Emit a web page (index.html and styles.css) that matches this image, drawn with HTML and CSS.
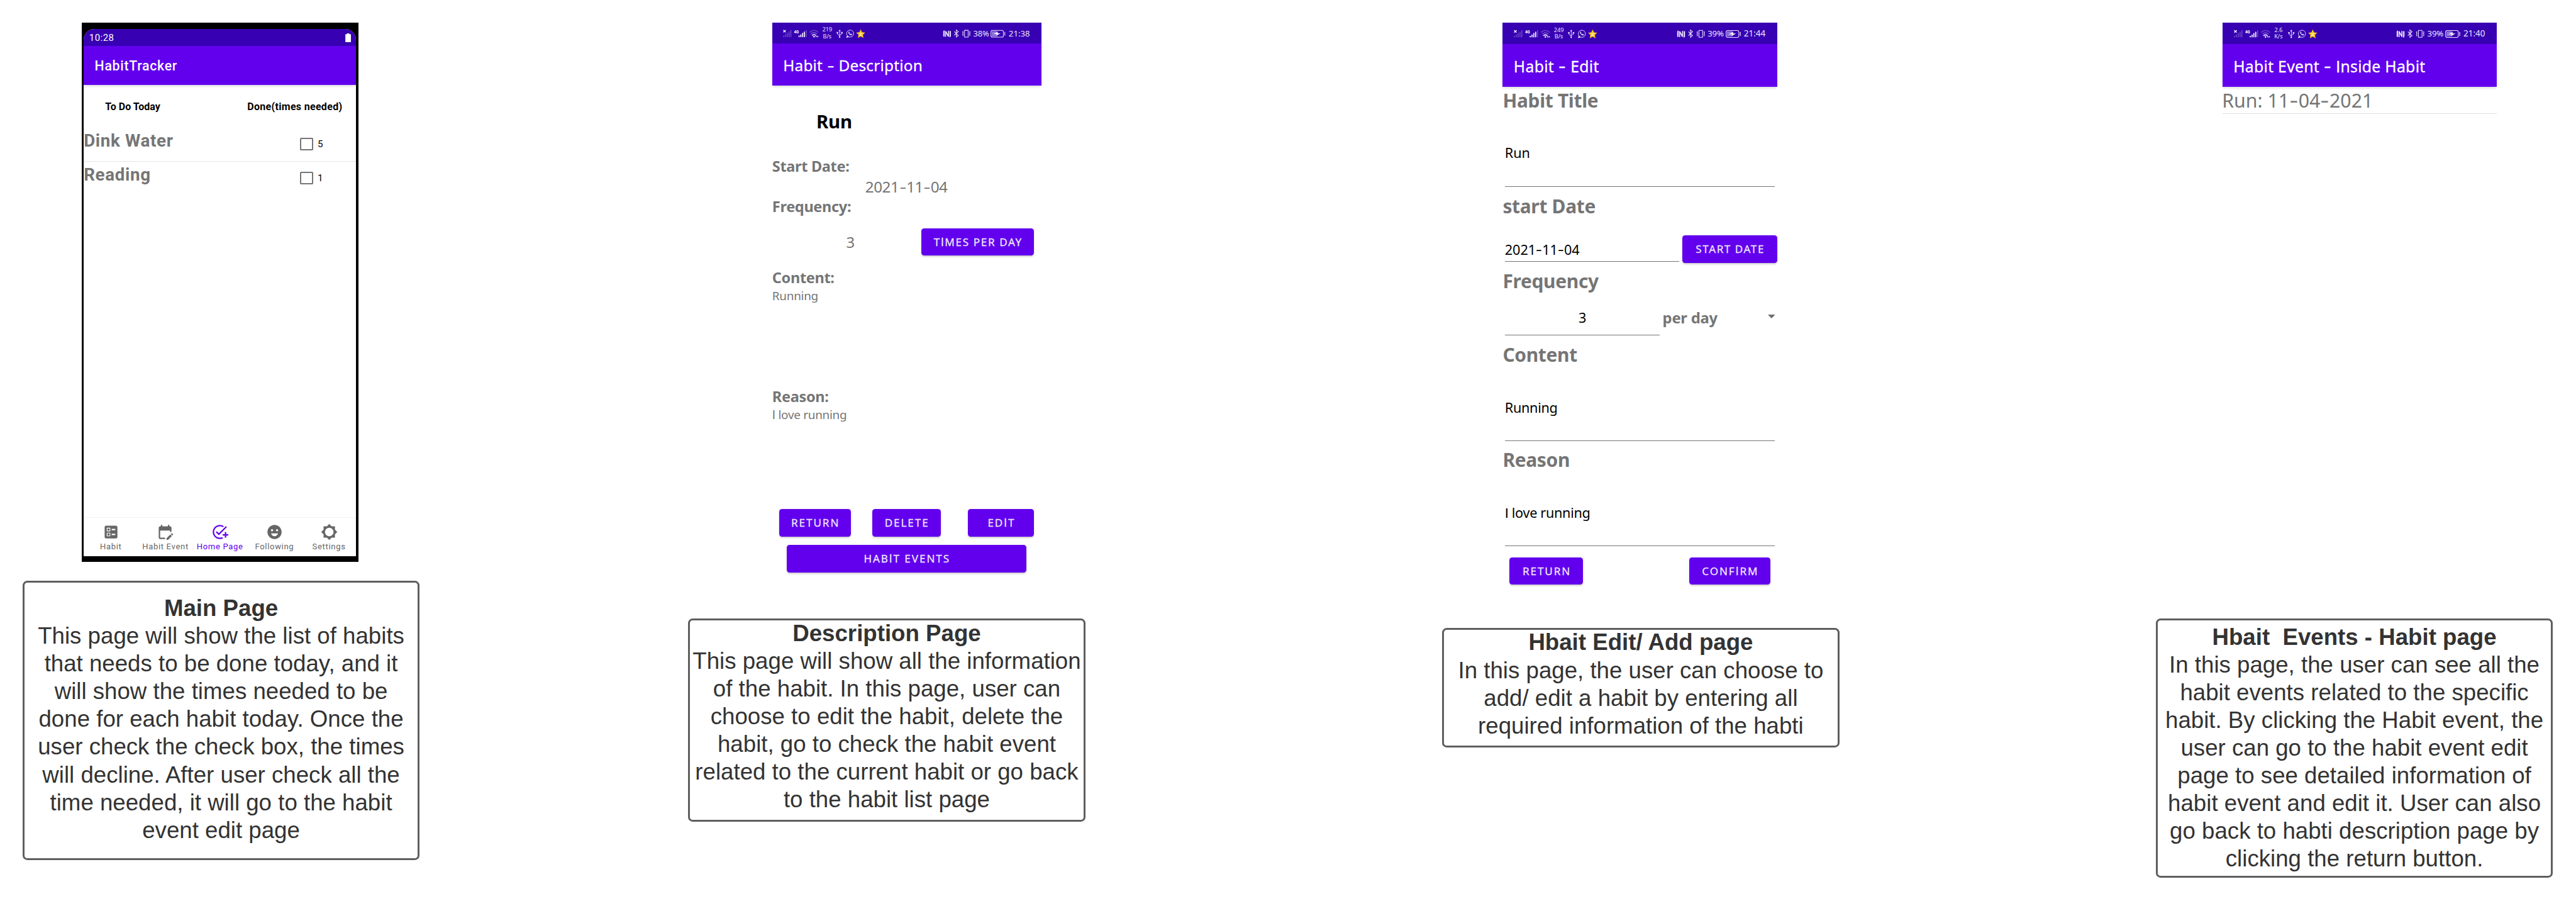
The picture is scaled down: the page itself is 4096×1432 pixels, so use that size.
FILE: index.html
```html
<!DOCTYPE html>
<html lang="en">
<head>
<meta charset="utf-8">
<title>HabitTracker storyboard</title>
<link rel="stylesheet" href="styles.css">
</head>
<body>
<svg class="defs" aria-hidden="true">
  <symbol id="net" viewBox="55 27 200 108">
    <path d="M60 63l13 12M73 63l-13 12" stroke="#fff" stroke-width="4"/>
    <path d="M62 100v-8M71.500 100v-14M81 100v-22M90.500 100v-29M100 100v-37" stroke="#7454cc" stroke-width="4.500"/>
    <text x="117" y="80" class="net-label" textLength="25" lengthAdjust="spacingAndGlyphs">4G</text>
    <path d="M143.500 100v-8M153 100v-14M162.500 100v-22M172 100v-29" stroke="#fff" stroke-width="5.500"/>
    <path d="M181.500 100v-37" stroke="#7454cc" stroke-width="4.500"/>
    <g fill="none" stroke-width="5">
      <path d="M199 75Q222 54 246 75" stroke="#6543c4"/>
      <path d="M206 84Q222 69 239 84" stroke="#7454cc"/>
      <path d="M212 92Q222 82 233 92" stroke="#fff"/>
    </g>
    <circle cx="222.500" cy="98" r="4" fill="#fff"/>
    <path d="M236 92v10l-6-5zM240 92v10l7-5z" fill="#fff"/>
  </symbol>
  <symbol id="apps" viewBox="330 27 170 108">
    <g fill="none" stroke="#e4dcf8" stroke-width="3.200">
      <path d="M357 66v34M345 77v7l12 9M369 77v6l-12 7"/>
      <circle cx="412.500" cy="81.500" r="18.500"/>
      <path d="M398 93l-5 9 12-3" fill="#e4dcf8"/>
    </g>
    <path d="M357 60l6 9h-12zM341 73h8v7h-8zM365 73h8v7h-8z" fill="#e4dcf8"/>
    <circle cx="357" cy="100" r="4" fill="#e4dcf8"/>
    <path d="M404 73c-2 3 0 9 5 13s10 6 13 3l1-4-6-3-3 2c-3-1-5-3-6-6l2-2-3-6z" fill="#e4dcf8"/>
    <path d="M468.500 61l6.600 14.200 15.600 1.900-11.500 10.600 3 15.300-13.700-7.600-13.700 7.600 3-15.300-11.500-10.600 15.600-1.900z" fill="#ffc41d" stroke="#ffc41d" stroke-width="2" stroke-linejoin="round"/>
    <path d="M460 80h15l-13 11h15" fill="none" stroke="#fff3b8" stroke-width="3.500"/>
  </symbol>
  <symbol id="radios" viewBox="900 27 160 108">
    <g fill="none" stroke="#e9e2fa">
      <path d="M909.500 97V71q0-3 4-3M943 68v26q0 4-4 4" stroke-width="7"/>
      <path d="M918.500 99V69l15 28V67" stroke-width="5.500"/>
      <path d="M964 71l22 20-11 9V62l11 9-22 20" stroke-width="3.500"/>
      <path d="M1019 64h19v36h-19z" stroke-width="3.500" stroke-linejoin="round"/>
      <path d="M1012 69l-3 5 3 5-3 5 3 5-3 5M1045 69l3 5-3 5 3 5-3 5 3 5" stroke-width="3.500"/>
    </g>
  </symbol>
  <symbol id="power" viewBox="1155 27 85 108">
    <rect x="1160.500" y="64.500" width="66" height="36" rx="8" fill="none" stroke="#e9e2fa" stroke-width="3.500"/>
    <rect x="1165" y="69" width="30" height="27" rx="3" fill="#8f73da"/>
    <path d="M1175 84l22-12-1 8h16l-22 12 1-8z" fill="#fff"/>
    <path d="M1234 73v19" stroke="#e9e2fa" stroke-width="4"/>
  </symbol>
</svg>

<main class="board">

  <section class="column column-main">
    <div class="device">
      <div class="device-screen">
        <div class="android-status">
          <span>10:28</span>
          <svg class="android-battery" viewBox="0 0 10 16"><path d="M3 0h4v1.500h2q1 0 1 1V15q0 1-1 1H1q-1 0-1-1V2.500q0-1 1-1h2z" fill="#fff"/></svg>
        </div>
        <header class="android-bar">HabitTracker</header>
        <div class="list-head"><span>To Do Today</span><span class="list-head-done">Done(times needed)</span></div>
        <ul class="todo">
          <li><span class="todo-name">Dink Water</span><span class="todo-check"></span><span class="todo-count">5</span></li>
          <li><span class="todo-name">Reading</span><span class="todo-check"></span><span class="todo-count">1</span></li>
        </ul>
        <nav class="tabs">
          <div class="tab"><svg viewBox="0 0 24 24"><path fill-rule="evenodd" d="M13 9.500h5v-2h-5v2zm0 7h5v-2h-5v2zm6 4.500H5c-1.100 0-2-.9-2-2V5c0-1.100.9-2 2-2h14c1.100 0 2 .9 2 2v14c0 1.100-.9 2-2 2zM6 11h5V6H6v5zm1-4h3v3H7V7zM6 18h5v-5H6v5zm1-4h3v3H7v-3z"/></svg>Habit</div>
          <div class="tab"><svg viewBox="0 0 24 24"><path d="M5 10h14v2h2V6c0-1.100-.9-2-2-2h-1V2h-2v2H8V2H6v2H5c-1.110 0-1.990.9-1.990 2L3 20c0 1.100.89 2 2 2h7v-2H5V10zm17.840 6.280l-.71.71-2.120-2.120.71-.71c.39-.39 1.020-.39 1.410 0l.71.71c.39.39.39 1.020 0 1.410zm-3.540-.7l2.120 2.120-5.300 5.300H14v-2.120l5.300-5.300z"/></svg>Habit Event</div>
          <div class="tab tab-active"><svg viewBox="0 0 24 24"><path d="M22 5.180L10.590 16.600l-4.240-4.240 1.410-1.410 2.830 2.830 10-10L22 5.180zM12 20c-4.410 0-8-3.590-8-8s3.590-8 8-8c1.570 0 3.040.46 4.280 1.250l1.450-1.450C16.100 2.670 14.130 2 12 2 6.480 2 2 6.480 2 12s4.480 10 10 10c1.730 0 3.360-.44 4.780-1.220l-1.500-1.500c-1 .46-2.110.72-3.280.72zm7-5h-3v2h3v3h2v-3h3v-2h-3v-3h-2v3z"/></svg>Home Page</div>
          <div class="tab"><svg viewBox="0 0 24 24"><path d="M11.990 2C6.470 2 2 6.480 2 12s4.470 10 9.990 10C17.520 22 22 17.520 22 12S17.520 2 11.990 2zM8.500 8c.83 0 1.500.67 1.500 1.500S9.330 11 8.500 11 7 10.330 7 9.500 7.670 8 8.500 8zM12 18c-2.280 0-4.220-1.660-5-4h10c-.78 2.340-2.720 4-5 4zm3.500-7c-.83 0-1.500-.67-1.500-1.500S14.670 8 15.500 8s1.500.67 1.500 1.500-.67 1.500-1.500 1.500z"/></svg>Following</div>
          <div class="tab"><svg viewBox="0 0 24 24"><path d="M20 15.310L23.310 12 20 8.690V4h-4.690L12 .69 8.690 4H4v4.690L.69 12 4 15.310V20h4.690L12 23.310 15.310 20H20v-4.690zM12 18c-3.310 0-6-2.690-6-6s2.690-6 6-6 6 2.690 6 6-2.690 6-6 6z"/></svg>Settings</div>
        </nav>
      </div>
    </div>
    <article class="note note-main">
      <h2>Main Page</h2>
      <p>This page will show the list of habits<br>that needs to be done today, and it<br>will show the times needed to be<br>done for each habit today. Once the<br>user check the check box, the times<br>will decline. After user check all the<br>time needed, it will go to the habit<br>event edit page</p>
    </article>
  </section>

  <section class="column column-description">
    <div class="screen screen-description">
      <div class="status">
        <svg class="status-net"><use href="#net"/></svg>
        <span class="status-speed">219<br>B/s</span>
        <svg class="status-apps"><use href="#apps"/></svg>
        <svg class="status-radios"><use href="#radios"/></svg>
        <span class="status-percent">38%</span>
        <svg class="status-power"><use href="#power"/></svg>
        <span class="status-time">21:38</span>
      </div>
      <header class="bar">Habit <span class="dash">-</span> Description</header>
      <h1 class="habit-name">Run</h1>
      <h3 class="label">Start Date:</h3>
      <div class="start-date">2021<span class="dash">-</span>11<span class="dash">-</span>04</div>
      <h3 class="label">Frequency:</h3>
      <div class="times-row"><span class="times">3</span><button class="btn btn-times">T<span class="i">I</span>MES PER DAY</button></div>
      <h3 class="label">Content:</h3>
      <p class="detail">Running</p>
      <h3 class="label label-reason">Reason:</h3>
      <p class="detail"><span class="i">I</span> love running</p>
      <div class="actions">
        <button class="btn btn-return">RETURN</button>
        <button class="btn btn-delete">DELETE</button>
        <button class="btn btn-edit">ED<span class="i">I</span>T</button>
      </div>
      <button class="btn btn-events">HAB<span class="i">I</span>T EVENTS</button>
    </div>
    <article class="note note-description">
      <h2>Description Page</h2>
      <p>This page will show all the information<br>of the habit. In this page, user can<br>choose to edit the habit, delete the<br>habit, go to check the habit event<br>related to the current habit or go back<br>to the habit list page</p>
    </article>
  </section>

  <section class="column column-edit">
    <div class="screen screen-edit">
      <div class="status">
        <svg class="status-net"><use href="#net"/></svg>
        <span class="status-speed">249<br>B/s</span>
        <svg class="status-apps"><use href="#apps"/></svg>
        <svg class="status-radios"><use href="#radios"/></svg>
        <span class="status-percent">39%</span>
        <svg class="status-power"><use href="#power"/></svg>
        <span class="status-time">21:44</span>
      </div>
      <header class="bar">Habit <span class="dash">-</span> Edit</header>
      <h3 class="heading">Habit Title</h3>
      <div class="field field-tall">Run</div>
      <h3 class="heading">start Date</h3>
      <div class="date-row">
        <div class="field field-date">2021<span class="dash">-</span>11<span class="dash">-</span>04</div>
        <button class="btn btn-date">START DATE</button>
      </div>
      <h3 class="heading heading-frequency">Frequency</h3>
      <div class="frequency-row">
        <div class="field field-count">3</div>
        <span class="unit">per day</span>
        <svg class="caret" viewBox="0 0 12 6"><path d="M0 0h12L6 6z" fill="#6f6f6f"/></svg>
      </div>
      <h3 class="heading">Content</h3>
      <div class="field field-tall field-content">Running</div>
      <h3 class="heading">Reason</h3>
      <div class="field field-tall field-content"><span class="i">I</span> love running</div>
      <div class="confirm-row">
        <button class="btn btn-back">RETURN</button>
        <button class="btn btn-confirm">CONF<span class="i">I</span>RM</button>
      </div>
    </div>
    <article class="note note-edit">
      <h2>Hbait Edit/ Add page</h2>
      <p>In this page, the user can choose to<br>add/ edit a habit by entering all<br>required information of the habti</p>
    </article>
  </section>

  <section class="column column-events">
    <div class="screen screen-events">
      <div class="status">
        <svg class="status-net"><use href="#net"/></svg>
        <span class="status-speed">2.6<br>K/s</span>
        <svg class="status-apps"><use href="#apps"/></svg>
        <svg class="status-radios"><use href="#radios"/></svg>
        <span class="status-percent">39%</span>
        <svg class="status-power"><use href="#power"/></svg>
        <span class="status-time">21:40</span>
      </div>
      <header class="bar">Habit Event <span class="dash">-</span> <span class="i">I</span>nside Habit</header>
      <div class="event">Run: 11<span class="dash">-</span>04<span class="dash">-</span>2021</div>
    </div>
    <article class="note note-events">
      <h2>Hbait&nbsp; Events - Habit page</h2>
      <p>In this page, the user can see all the<br>habit events related to the specific<br>habit. By clicking the Habit event, the<br>user can go to the habit event edit<br>page to see detailed information of<br>habit event and edit it. User can also<br>go back to habti description page by<br>clicking the return button.</p>
    </article>
  </section>

</main>
</body>
</html>
```
FILE: styles.css
```css
/* One rem is 1/446 of the board's width. */
html { font-size: calc(100vw / 446); }
*, *::before, *::after { box-sizing: border-box; }
body { margin: 0; background: #fff; overflow: hidden; }
h1, h2, h3, p, ul { margin: 0; padding: 0; font-weight: inherit; font-size: inherit; }
ul { list-style: none; }
svg { display: block; flex: none; }
.defs { position: absolute; width: 0; height: 0; }

.board {
  display: flex;
  align-items: flex-start;
  height: 100vh;
  padding: 3.95rem 0 0 3.88rem;
  white-space: nowrap;
}
.column { flex: none; display: flex; flex-direction: column; width: 68.8rem; }
.column-description { margin-left: 46.45rem; }
.column-edit { margin-left: 61.75rem; }
.column-events { margin-left: 54.75rem; }

/* Notes under the screens */
.note {
  border: .36rem solid #5e5e5e;
  border-radius: .8rem;
  color: #333;
  font: 400 3.993rem/4.8rem "Liberation Sans", Arial, sans-serif;
  text-align: center;
}
.note h2 { font-weight: 700; }
.note-main { height: 48.3rem; margin-top: 3.3rem; padding-top: 2.03rem; }
.note-description { height: 35.2rem; margin-top: 5.1rem; }
.note-edit { height: 20.7rem; margin-top: 6.7rem; }
.note-description h2, .note-edit h2 { margin-top: -.15rem; }
.note-events { height: 44.9rem; margin-top: 5.1rem; padding-top: .5rem; }

/* Main page device */
.device {
  width: 47.9rem;
  height: 93.3rem;
  margin-left: 10.3rem;
  padding: 1.1rem .4rem 1rem .3rem;
  background: #000;
  font-family: Roboto, sans-serif;
}
.device-screen {
  display: flex;
  flex-direction: column;
  height: 100%;
  border-radius: 1.9rem 1.9rem 0 0;
  background: #fff;
}
.android-status {
  display: flex;
  align-items: center;
  justify-content: space-between;
  height: 2.9rem;
  padding: .15rem .9rem 0 .97rem;
  border-radius: 1.9rem 1.9rem 0 0;
  background: #3700b3;
  color: #fff;
  font-size: 1.63rem;
  letter-spacing: .05rem;
}
.android-battery { width: 1rem; height: 1.55rem; }
.android-bar {
  height: 6.7rem;
  padding: .3rem 0 0 1.92rem;
  background: #6200ee;
  box-shadow: 0 .3rem .4rem -.1rem rgba(0, 0, 0, .15);
  color: #fff;
  font-size: 2.32rem;
  font-weight: 500;
  letter-spacing: .078rem;
  line-height: 6.4rem;
}
.list-head {
  display: flex;
  justify-content: space-between;
  margin-top: 2.85rem;
  padding: 0 2.4rem 0 3.74rem;
  font-size: 1.74rem;
  font-weight: 700;
  line-height: 2rem;
}
.list-head-done { letter-spacing: .036rem; }
.todo { flex: 1; margin-top: 2.6rem; }
.todo li { display: flex; height: 5.9rem; }
.todo li:first-child { border-bottom: .2rem solid #e4e4e4; }
.todo-name {
  width: 37.5rem;
  padding: .42rem 0 0 .02rem;
  color: #757575;
  font-size: 3.02rem;
  font-weight: 700;
  letter-spacing: .073rem;
  line-height: 3.6rem;
}
.todo-check {
  width: 2.2rem;
  height: 2.15rem;
  margin-top: 1.75rem;
  border: .22rem solid #757575;
  border-radius: .2rem;
}
.todo-count { margin: 1.75rem 0 0 .8rem; font-size: 1.64rem; line-height: 2.2rem; }
.tabs {
  display: flex;
  height: 6.8rem;
  padding-top: 1rem;
  border-top: .12rem solid #f2f2f2;
}
.tab {
  flex: 1;
  display: flex;
  flex-direction: column;
  align-items: center;
  color: #666;
  font-size: 1.42rem;
  letter-spacing: .074rem;
  line-height: 1.8rem;
}
.tab svg { width: 2.95rem; height: 2.95rem; margin-bottom: .22rem; fill: currentColor; }
.tab-active { color: #6200ee; }

/* Shared parts of the phone screens */
.screen {
  display: flex;
  flex-direction: column;
  width: 47.5rem;
  height: 98rem;
  margin-left: 10.5rem;
  color: #757575;
  font-family: "Noto Sans", sans-serif;
}
.screen-description { width: 46.6rem; margin-left: 14.57rem; }
.screen-events { margin-left: 11.55rem; }
.i { font-family: Lato, sans-serif; line-height: 0; }
.dash { display: inline-block; margin: 0 .089em; transform: translateY(-.04em) scaleX(1.4); }

.status {
  flex: none;
  display: flex;
  align-items: center;
  height: 3.7rem;
  padding-left: 1.833em;
  background: #3700b3;
  color: #e9e2fa;
  font-size: 1rem;
}
.screen-description .status { height: 3.6rem; font-size: .981rem; }
.status-net { width: 6.667em; height: 3.6em; }
.status-speed { width: 1.7em; margin: 0 .43em 0 .367em; line-height: 1.17em; text-align: center; }
.status-apps { width: 5.667em; height: 3.6em; }
.status-radios { width: 5.333em; height: 3.6em; margin-left: 13.333em; }
.status-percent { width: 1.92em; margin-left: .11em; font-size: 1.45em; letter-spacing: -.02em; }
.status-power { width: 2.833em; height: 3.6em; margin-left: .2em; }
.status-time { margin-left: .3em; font-size: 1.47em; }
.net-label { fill: #fff; font: 700 22px Roboto, sans-serif; }

.bar {
  flex: none;
  height: 7.4rem;
  padding: .3rem 0 0 1.9rem;
  background: #6200ee;
  box-shadow: 0 .3rem .4rem -.1rem rgba(0, 0, 0, .15);
  color: #fff;
  font-size: 2.7rem;
  letter-spacing: .03rem;
  line-height: 7.05rem;
  -webkit-text-stroke: .012em currentColor;
}
.screen-description .bar { height: 7.3rem; font-size: 2.66rem; letter-spacing: .02rem; }

.btn {
  flex: none;
  height: 4.7rem;
  padding: 0 0 0 .19rem;
  border: 0;
  border-radius: .5rem;
  background: #6200ee;
  box-shadow: 0 .2rem .3rem rgba(0, 0, 0, .2);
  color: #f0e8fd;
  font: 400 1.86rem/4.75rem "Noto Sans", sans-serif;
  letter-spacing: .21rem;
  text-align: center;
  -webkit-text-stroke: .015em currentColor;
}

/* Description page */
.habit-name {
  margin: 4rem 0 3.87rem 7.65rem;
  color: #000;
  font-size: 3.2rem;
  font-weight: 700;
  letter-spacing: -.03rem;
  line-height: 4.4rem;
}
.label { font-size: 2.56rem; font-weight: 700; letter-spacing: -.035rem; line-height: 3.4rem; }
.start-date { padding-left: 16.1rem; font-size: 2.64rem; letter-spacing: -.047rem; line-height: 3.6rem; }
.times-row { display: flex; margin: 2rem 0 2.2rem; }
.times { width: 25.83rem; padding: .6rem 0 0 12.8rem; font-size: 2.6rem; line-height: 3.6rem; }
.btn-times { width: 19.47rem; letter-spacing: .18rem; }
.detail { font-size: 2.06rem; letter-spacing: -.03rem; line-height: 2.9rem; }
.label-reason { margin-top: 14.28rem; }
.actions { display: flex; margin: 14.85rem 0 1.5rem 1.2rem; }
.btn-return { width: 12.4rem; }
.btn-delete { width: 11.83rem; margin-left: 3.73rem; }
.btn-edit { width: 11.47rem; margin-left: 4.71rem; }
.btn-events { width: 41.5rem; margin-left: 2.5rem; }

/* Edit page */
.heading {
  margin-top: 1.17rem;
  font-size: 3.26rem;
  font-weight: 700;
  letter-spacing: -.035rem;
  line-height: 4.4rem;
}
.bar + .heading { margin-top: .22rem; }
.field {
  flex: none;
  width: 46.65rem;
  margin-left: .43rem;
  border-bottom: .15rem solid #757575;
  color: #000;
  font-size: 2.36rem;
  letter-spacing: -.01rem;
  line-height: 3.2rem;
  text-indent: -.06rem;
}
.field-tall { height: 7.48rem; margin-top: 5.21rem; }
.field-content { height: 7.4rem; margin-top: 5.3rem; letter-spacing: -.035rem; }
.date-row { display: flex; margin-top: 2.83rem; }
.field-date { width: 30.17rem; height: 4.5rem; margin-right: .5rem; padding-top: .85rem; }
.btn-date { width: 16.4rem; height: 4.76rem; letter-spacing: .17rem; }
.heading-frequency { margin-top: .99rem; }
.frequency-row { display: flex; margin-top: 2.43rem; }
.field-count { width: 26.8rem; height: 4.69rem; text-align: center; }
.unit {
  margin: -.15rem 0 0 .45rem;
  font-size: 2.6rem;
  font-weight: 700;
  letter-spacing: -.03rem;
  line-height: 3.6rem;
}
.caret { width: 1.27rem; height: .65rem; margin: 1.14rem .35rem 0 auto; }
.confirm-row { display: flex; justify-content: space-between; margin-top: 1.9rem; padding: 0 1.2rem; }
.btn-back { width: 12.7rem; }
.btn-confirm { width: 13.97rem; }

/* Habit events page */
.event {
  height: 4.65rem;
  padding-top: .39rem;
  border-bottom: .12rem solid #ddd;
  font-size: 3.3rem;
  line-height: 4rem;
  text-indent: -.06rem;
}
```
